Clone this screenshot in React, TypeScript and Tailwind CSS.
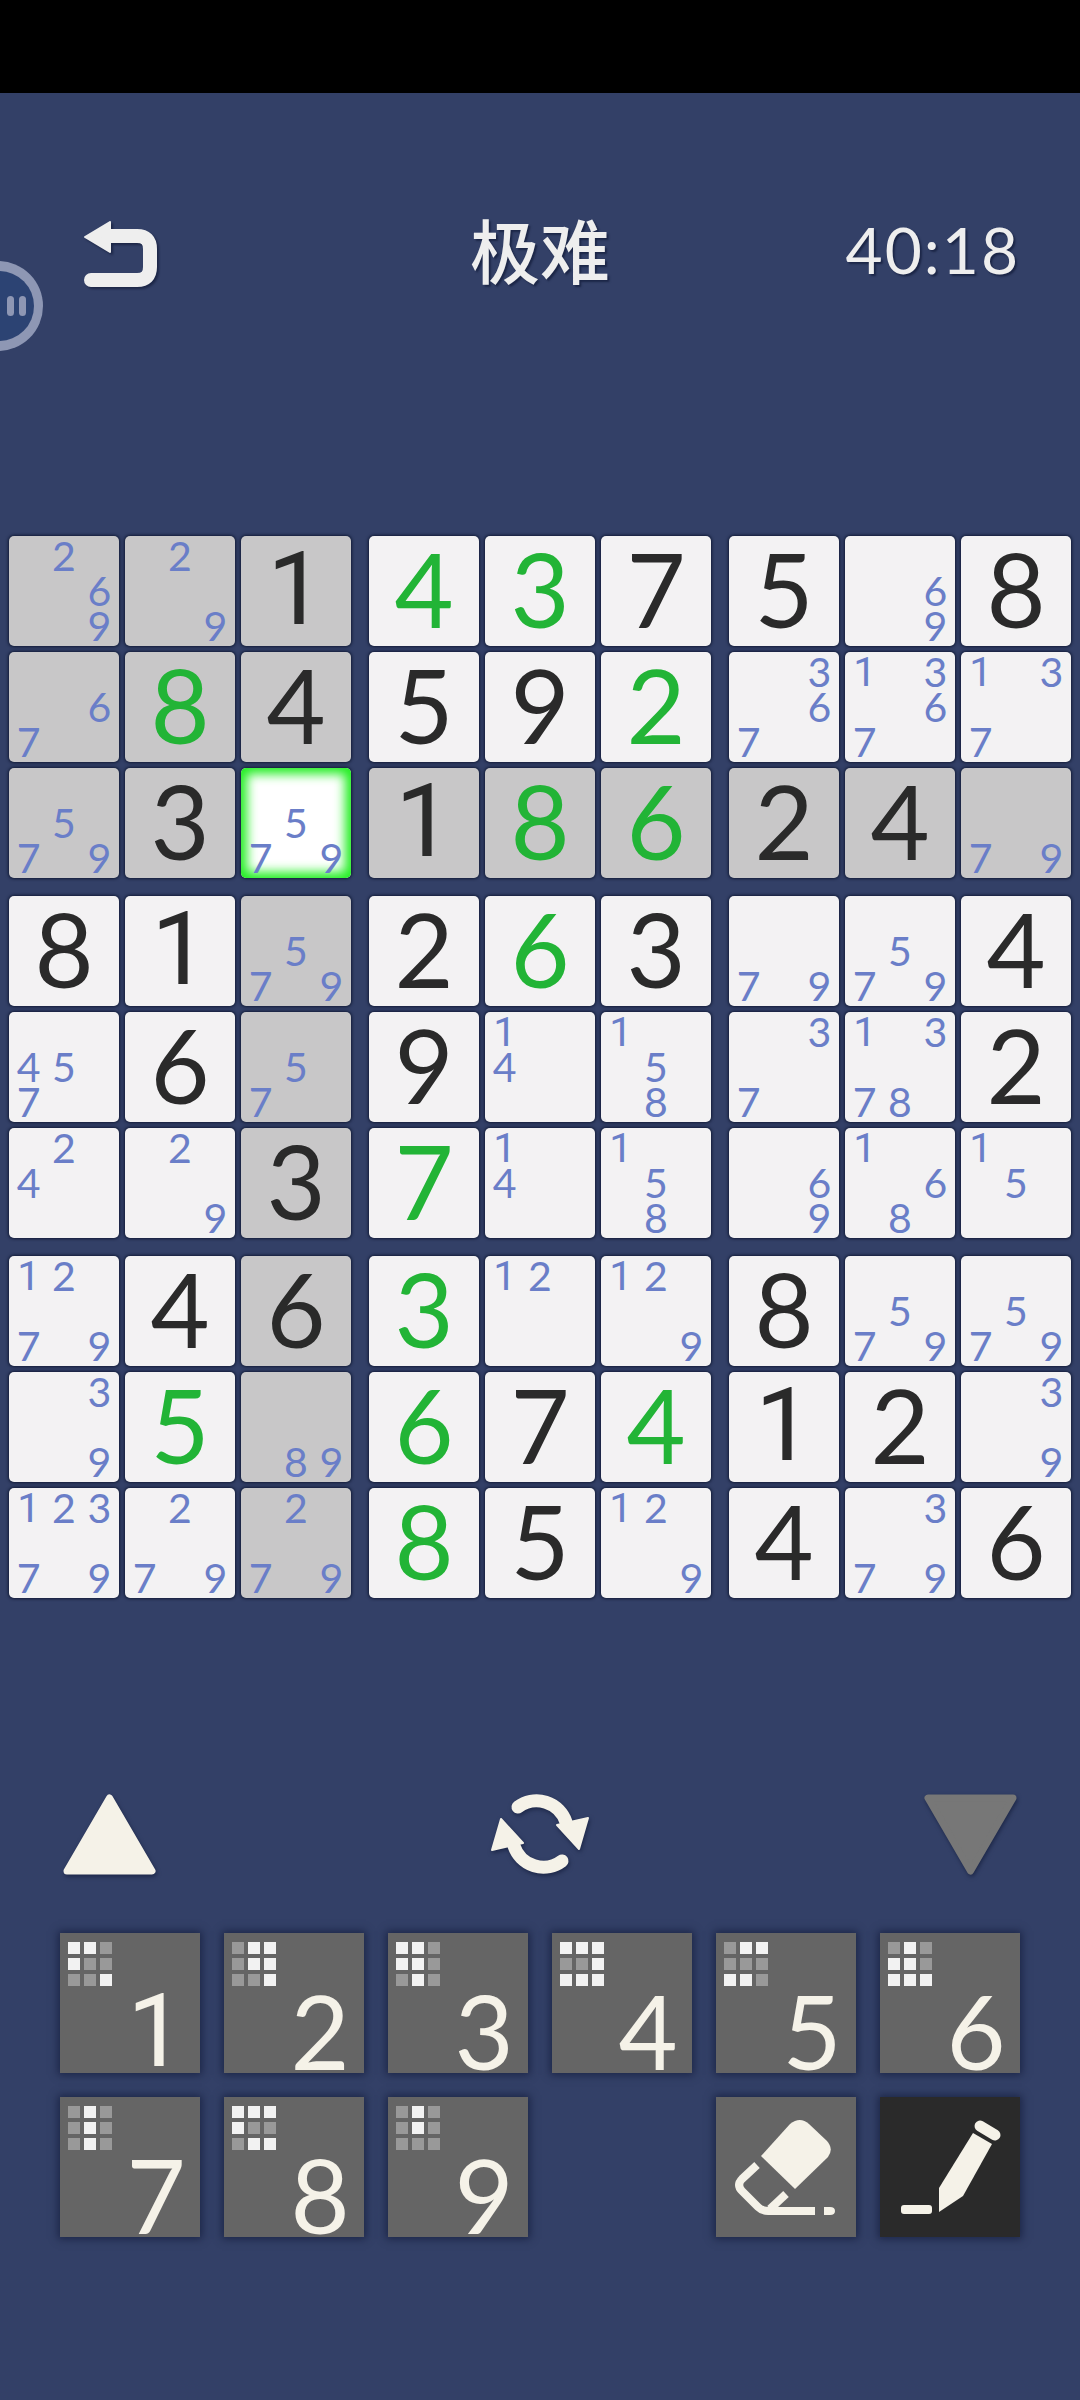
import React from 'react';

// k = given digit, g = player's digit, n = pencil marks
const rows: string[][] = [
  ['n269', 'n29', 'k1', 'g4', 'g3', 'k7', 'k5', 'n69', 'k8'],
  ['n67', 'g8', 'k4', 'k5', 'k9', 'g2', 'n367', 'n1367', 'n137'],
  ['n579', 'k3', 'n579', 'k1', 'g8', 'g6', 'k2', 'k4', 'n79'],
  ['k8', 'k1', 'n579', 'k2', 'g6', 'k3', 'n79', 'n579', 'k4'],
  ['n457', 'k6', 'n57', 'k9', 'n14', 'n158', 'n37', 'n1378', 'k2'],
  ['n24', 'n29', 'k3', 'g7', 'n14', 'n158', 'n69', 'n168', 'n15'],
  ['n1279', 'k4', 'k6', 'g3', 'n12', 'n129', 'k8', 'n579', 'n579'],
  ['n39', 'g5', 'n89', 'g6', 'k7', 'g4', 'k1', 'k2', 'n39'],
  ['n12379', 'n279', 'n279', 'g8', 'k5', 'n129', 'k4', 'n379', 'k6'],
];

const masks: Record<number, string> = {
  1: '110100001',
  2: '011011001',
  3: '110110010',
  4: '111001111',
  5: '011000110',
  6: '010110111',
  7: '010010010',
  8: '111100011',
  9: '010010000',
};

// Lato's 1 has a foot, the picture's has not
const fontFor = (d: string) =>
  d === '1' ? "font-['Roboto',sans-serif] font-normal" : "font-['Lato','Liberation_Sans',sans-serif]";

function Cell({ value, r, c }: { value: string; r: number; c: number }) {
  const selected = r === 2 && c === 2;
  const highlighted = r === 2 || c === 2 || (r < 3 && c < 3);
  const kind = value[0];
  const digits = value.slice(1);

  let look = 'bg-[#f3f2f3] shadow-[0_0_3px_1px_#111a36]';
  if (highlighted) look = 'bg-[#c8c7c8] shadow-[0_0_3px_1px_#111a36]';
  if (selected) look = 'bg-white shadow-[0_0_3px_1px_#111a36,inset_0_0_11px_6px_#22ee22]';

  return (
    <div className={`w-[110px] h-[110px] rounded-[5px] ${look}`}>
      {kind === 'n' ? (
        <div className="grid grid-cols-3 grid-rows-3 w-full h-full p-[2px]">
          {['1', '2', '3', '4', '5', '6', '7', '8', '9'].map((d) => (
            <div
              key={d}
              className={`flex items-center justify-center text-[41px] leading-[34px] text-[#6a7ec8] ${fontFor(d)}`}
            >
              {digits.includes(d) ? d : ''}
            </div>
          ))}
        </div>
      ) : (
        <div
          className={`flex items-center justify-center w-full h-full pb-[4px] text-[102px] leading-none ${fontFor(digits)} ${
            kind === 'g' ? 'text-[#22b436]' : 'text-[#2a2a2a]'
          }`}
        >
          {digits}
        </div>
      )}
    </div>
  );
}

function Board() {
  return (
    <div className="flex flex-col gap-[18px] ml-[9px] mt-[249px]">
      {[0, 3, 6].map((br) => (
        <div key={br} className="flex gap-[18px]">
          {[0, 3, 6].map((bc) => (
            <div key={bc} className="grid grid-cols-3 gap-[6px]">
              {[0, 1, 2].flatMap((i) =>
                [0, 1, 2].map((j) => (
                  <Cell key={`${i}${j}`} value={rows[br + i][bc + j]} r={br + i} c={bc + j} />
                )),
              )}
            </div>
          ))}
        </div>
      ))}
    </div>
  );
}

function NumKey({ n }: { n: number }) {
  return (
    <div className="flex flex-col w-[140px] h-[140px] bg-[#656565] pt-[9px] pl-[8px] shadow-[0_0_8px_2px_#1c2647]">
      <div className="grid grid-cols-[12px_12px_12px] auto-rows-[12px] gap-[4px]">
        {masks[n].split('').map((on, i) => (
          <div key={i} className={on === '1' ? 'bg-[#f2f2f2]' : 'bg-[#999999]'} />
        ))}
      </div>
      <div
        className={`self-end w-[60px] mr-[14px] mt-[-5px] text-center text-[102px] leading-[100px] text-[#f5f2e8] ${fontFor(String(n))}`}
      >
        {n}
      </div>
    </div>
  );
}

function BackIcon() {
  return (
    <svg width="73" height="66" viewBox="0 0 73 66" className="drop-shadow-[2px_2px_1px_#1c2647]">
      <polygon points="1,16 26,1 26,31" fill="#eeeeee" stroke="#eeeeee" strokeWidth="2" strokeLinejoin="round" />
      <path
        d="M24 15 H53 Q66 15 66 28 V46 Q66 59 53 59 H7"
        fill="none"
        stroke="#eeeeee"
        strokeWidth="14"
        strokeLinecap="round"
      />
    </svg>
  );
}

function CycleArrow({ flip }: { flip?: boolean }) {
  return (
    <g transform={flip ? 'rotate(180 50 42)' : undefined}>
      <path d="M28 15 A31 31 0 0 1 76 30" fill="none" stroke="#f5f2e8" strokeWidth="13" strokeLinecap="round" />
      <polygon points="98,26 89,57 67,33" fill="#f5f2e8" stroke="#f5f2e8" strokeWidth="2" strokeLinejoin="round" />
    </g>
  );
}

function EraserKey() {
  return (
    <div className="w-[140px] h-[140px] bg-[#656565] shadow-[0_0_8px_2px_#1c2647]">
      <svg width="140" height="140" viewBox="0 0 140 140">
        <path d="M45 59 L74 27 Q84 19 93 27 L111 44 Q118 52 112 60 L79 92 Z" fill="#f5f2e8" />
        <path
          d="M41 68 L26 82 Q20 88 26 94 L42 110 Q46 114 52 114 H99"
          fill="none"
          stroke="#f5f2e8"
          strokeWidth="8"
        />
        <path d="M70 97 L54 112" fill="none" stroke="#f5f2e8" strokeWidth="8" />
        <path d="M108 110 H114 Q119 110 119 114 Q119 118 114 118 H108 Z" fill="#f5f2e8" />
      </svg>
    </div>
  );
}

function PencilKey() {
  return (
    <div className="w-[140px] h-[140px] bg-[#2a2a2a] shadow-[0_0_8px_2px_#1c2647]">
      <svg width="140" height="140" viewBox="0 0 140 140">
        <path d="M59 91 L93 36 L112 47 L83 99 L59 115 Z" fill="#f5f2e8" strokeLinejoin="round" />
        <path d="M100 29 L115 38" fill="none" stroke="#f5f2e8" strokeWidth="11" strokeLinecap="round" />
        <rect x="21" y="108" width="31" height="9" rx="3" fill="#f5f2e8" />
      </svg>
    </div>
  );
}

export default function App() {
  return (
    <div className="relative flex flex-col w-[1080px] h-[2400px] bg-[#334067] overflow-hidden">
      <div className="h-[93px] bg-black" />

      {/* floating assistant bubble */}
      <div className="absolute left-[-47px] top-[261px] flex items-center justify-end w-[90px] h-[90px] rounded-full bg-[#8e97b4]">
        <div className="flex items-center justify-end gap-[5px] pr-[8px] w-[70px] h-[70px] mr-[9px] rounded-full bg-[#2c4373]">
          <div className="w-[7px] h-[20px] rounded-full bg-[#8e97b4]" />
          <div className="w-[7px] h-[20px] rounded-full bg-[#8e97b4]" />
        </div>
      </div>

      <div className="grid grid-cols-3 items-start h-[66px] mt-[128px]">
        <div className="pl-[84px]">
          <BackIcon />
        </div>
        <div className="mt-[-7px] text-center text-[70px] leading-none font-medium text-[#eeeeee] font-['Noto_Sans_CJK_SC',sans-serif] [text-shadow:2px_2px_2px_#1c2647]">
          极难
        </div>
        <div className="mt-[-3px] text-right pr-[60px] text-[64px] leading-none tracking-[2px] text-[#eeeeee] font-['Lato',sans-serif] [text-shadow:2px_2px_2px_#1c2647]">
          40:18
        </div>
      </div>

      <Board />

      <div className="flex items-center justify-between h-[84px] mt-[194px] px-[63px]">
        <svg width="93" height="81" viewBox="0 0 93 81" className="drop-shadow-[1px_2px_2px_#1c2647]">
          <polygon points="46.5,4 89,77 4,77" fill="#f5f2e8" stroke="#f5f2e8" strokeWidth="7" strokeLinejoin="round" />
        </svg>
        <svg width="100" height="84" viewBox="0 0 100 84" className="drop-shadow-[1px_2px_2px_#1c2647]">
          <CycleArrow />
          <CycleArrow flip />
        </svg>
        <svg width="93" height="81" viewBox="0 0 93 81" className="drop-shadow-[1px_2px_2px_#1c2647]">
          <polygon points="4,4 89,4 46.5,77" fill="#777777" stroke="#777777" strokeWidth="7" strokeLinejoin="round" />
        </svg>
      </div>

      <div className="grid grid-cols-[repeat(6,140px)] gap-[24px] ml-[60px] mt-[57px]">
        {[1, 2, 3, 4, 5, 6, 7, 8, 9].map((n) => (
          <NumKey key={n} n={n} />
        ))}
        <div />
        <EraserKey />
        <PencilKey />
      </div>
    </div>
  );
}
